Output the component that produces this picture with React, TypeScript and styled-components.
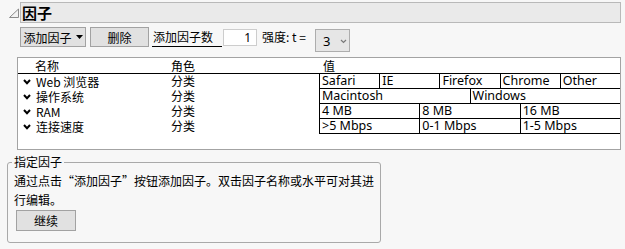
import React from "react";
import styled, { createGlobalStyle } from "styled-components";

const GlobalStyle = createGlobalStyle`
  html, body { margin: 0; padding: 0; background: #f7f7f7; }
  body {
    font-family: "Noto Sans", "Noto Sans CJK SC", sans-serif;
    font-size: 12px;
    color: #000;
  }
  * { box-sizing: border-box; }
`;

const Page = styled.div`
  width: 625px;
  height: 249px;
  overflow: hidden;
  padding-top: 2px;
`;

const Outline = styled.div`
  padding: 0 4px 0 8px;
`;

const HeaderRow = styled.div`
  display: flex;
  align-items: center;
  height: 21px;
`;

const Disclosure = styled.svg`
  width: 12px;
  height: 21px;
  flex: none;
`;

const TitleBar = styled.div`
  flex: 1;
  height: 21px;
  background: #eaeaea;
  border: 1px solid #b9b9b9;
  padding-left: 1px;
  font-family: "Noto Sans CJK SC", "Noto Sans", sans-serif;
  font-weight: 700;
  font-size: 15px;
  line-height: 19px;
`;

const Toolbar = styled.div`
  display: flex;
  align-items: flex-start;
  margin: 4px 0 0 12px;
  height: 25px;
`;

const Button = styled.button<{ $w: number }>`
  width: ${(p) => p.$w}px;
  height: 20px;
  margin: 0 ${(p) => (p.$w > 62 ? 4 : 3)}px 0 0;
  padding: 0;
  background: #e1e1e1;
  border: 1px solid #a2a2a2;
  border-radius: 0;
  font-family: "Noto Sans CJK SC", "Noto Sans", sans-serif;
  font-size: 12px;
  color: #000;
  display: flex;
  align-items: center;
  justify-content: center;
  gap: 4px;
`;

const Caret = styled.svg`
  width: 7px;
  height: 4px;
`;

const NumLabel = styled.div`
  height: 20px;
  width: 70px;
  padding-left: 1px;
  line-height: 19px;
  border-bottom: 1px solid #000;
  font-family: "Noto Sans CJK SC", "Noto Sans", sans-serif;
`;

const NumInput = styled.div`
  width: 34px;
  height: 17px;
  margin: 2px 0 0 1px;
  background: #fff;
  border: 1px solid #cdcdcd;
  text-align: right;
  padding-right: 5px;
  line-height: 15px;
  font-size: 12px;
`;

const Strength = styled.div`
  margin-left: 5px;
  line-height: 20px;
  font-family: "Noto Sans CJK SC", "Noto Sans", sans-serif;
  white-space: pre;
`;

const Select = styled.div`
  width: 35px;
  height: 23px;
  margin: 2px 0 0 9px;
  background: #e6e6e6;
  border: 1px solid #adadad;
  display: flex;
  align-items: center;
  padding-left: 7px;
  gap: 10px;
  font-size: 13px;
`;

const Chevron = styled.svg<{ $c: string; $w: number }>`
  width: ${(p) => p.$w}px;
  height: 6px;
  flex: none;
  stroke: ${(p) => p.$c};
`;

const Panel = styled.div`
  margin: 5px 0 0 9px;
  height: 93px;
  background: #fff;
  border: 1px solid #a3a3a3;
`;

const HeadRow = styled.div`
  display: flex;
  height: 16px;
  border-bottom: 1px solid #000;
  line-height: 15px;
  font-family: "Noto Sans CJK SC", "Noto Sans", sans-serif;
`;

const HeadCell = styled.div<{ $w?: number; $pl: number }>`
  ${(p) => (p.$w ? `width: ${p.$w}px;` : "flex: 1;")}
  padding-left: ${(p) => p.$pl}px;
`;

const Row = styled.div`
  display: flex;
  height: 15px;
`;

const NameCell = styled.div`
  width: 153px;
  display: flex;
  align-items: center;
  gap: 5px;
  padding-left: 5px;
  line-height: 14px;
  font-family: "Noto Sans CJK SC", "Noto Sans", sans-serif;
`;

const RoleCell = styled.div`
  width: 148px;
  line-height: 14px;
  font-family: "Noto Sans CJK SC", "Noto Sans", sans-serif;
`;

const Values = styled.div`
  width: 301px;
  display: flex;
`;

const ValueCell = styled.div`
  flex: 1;
  min-width: 0;
  border-left: 1px solid #000;
  border-bottom: 1px solid #000;
  padding-left: 2px;
  line-height: 14px;
  font-size: 12.5px;
  white-space: nowrap;
`;

const Fieldset = styled.fieldset`
  margin: 4px 0 0 7px;
  width: 374px;
  padding: 0 4px 11px 4px;
  border: 1px solid #a9a9a9;
  border-radius: 3px;
  min-width: 0;
`;

const Legend = styled.legend`
  padding: 0 2px;
  line-height: 16px;
  font-family: "Noto Sans CJK SC", "Noto Sans", sans-serif;
`;

const Hint = styled.p`
  margin: 1px 0 0 2px;
  width: 364px;
  line-height: 19px;
  font-family: "Noto Sans CJK SC", "Noto Sans", sans-serif;
`;

const ContinueButton = styled(Button)`
  margin: 1px 0 0 4px;
  height: 21px;
`;

const rows: { name: string; values: string[] }[] = [
  { name: "Web 浏览器", values: ["Safari", "IE", "Firefox", "Chrome", "Other"] },
  { name: "操作系统", values: ["Macintosh", "Windows"] },
  { name: "RAM", values: ["4 MB", "8 MB", "16 MB"] },
  { name: "连接速度", values: [">5 Mbps", "0-1 Mbps", "1-5 Mbps"] },
];

export default function App() {
  return (
    <Page>
      <GlobalStyle />
      <Outline>
        <HeaderRow>
          <Disclosure viewBox="0 0 12 21">
            <polygon points="1.5,15.5 10.5,15.5 10.5,7" fill="#f2f2f2" stroke="#8a8a8a" strokeWidth="1" />
          </Disclosure>
          <TitleBar>因子</TitleBar>
        </HeaderRow>
        <Toolbar>
          <Button $w={66}>
            添加因子
            <Caret viewBox="0 0 7 4">
              <polygon points="0,0 7,0 3.5,4" fill="#000" />
            </Caret>
          </Button>
          <Button $w={59}>删除</Button>
          <NumLabel>添加因子数</NumLabel>
          <NumInput>1</NumInput>
          <Strength>强度: t =</Strength>
          <Select>
            3
            <Chevron $c="#7a7a7a" $w={7} viewBox="0 0 7 6">
              <polyline points="1,2 3.5,4.5 6,2" fill="none" strokeWidth="1.2" />
            </Chevron>
          </Select>
        </Toolbar>
        <Panel>
          <HeadRow>
            <HeadCell $w={153} $pl={17}>名称</HeadCell>
            <HeadCell $w={148} $pl={0}>角色</HeadCell>
            <HeadCell $pl={4}>值</HeadCell>
          </HeadRow>
          {rows.map((r) => (
            <Row key={r.name}>
              <NameCell>
                <Chevron $c="#000" $w={8} viewBox="0 0 8 6">
                  <polyline points="1,1 4,4.2 7,1" fill="none" strokeWidth="2" />
                </Chevron>
                {r.name}
              </NameCell>
              <RoleCell>分类</RoleCell>
              <Values>
                {r.values.map((v) => (
                  <ValueCell key={v}>{v}</ValueCell>
                ))}
              </Values>
            </Row>
          ))}
        </Panel>
      </Outline>
      <Fieldset>
        <Legend>指定因子</Legend>
        <Hint>通过点击“添加因子”按钮添加因子。双击因子名称或水平可对其进行编辑。</Hint>
        <ContinueButton $w={60}>继续</ContinueButton>
      </Fieldset>
    </Page>
  );
}
